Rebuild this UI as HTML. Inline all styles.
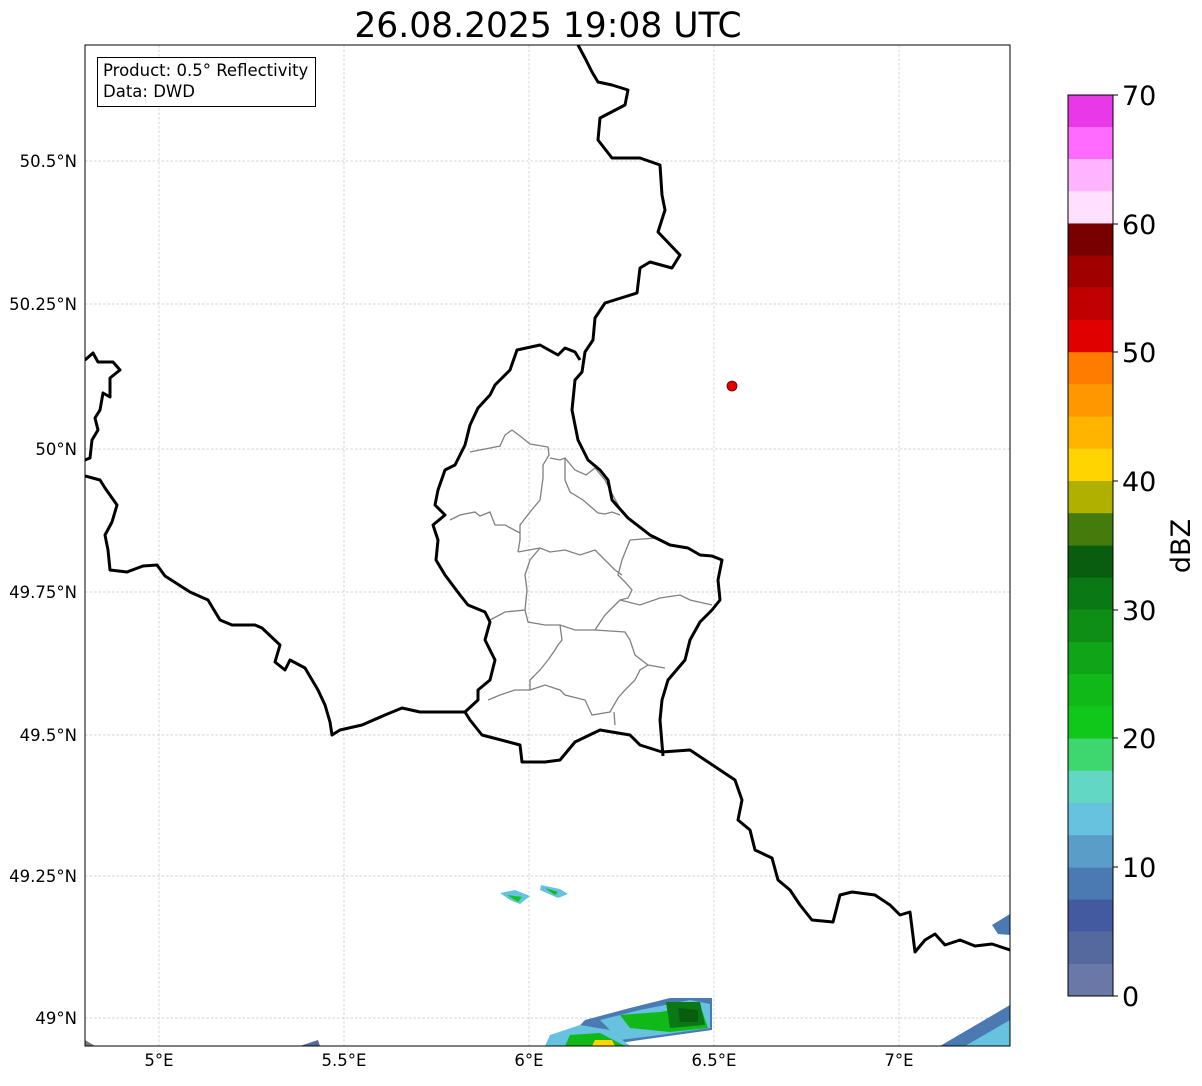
<!DOCTYPE html>
<html><head><meta charset="utf-8"><style>
body{margin:0;background:#fff;width:1202px;height:1081px;overflow:hidden;font-family:"Liberation Sans","DejaVu Sans",sans-serif}
</style></head><body>
<svg width="1202" height="1081" xmlns="http://www.w3.org/2000/svg" font-family="DejaVu Sans, Liberation Sans, sans-serif">
<text x="548" y="37" font-size="34.5" text-anchor="middle">26.08.2025 19:08 UTC</text>
<g stroke="#c4c4c4" stroke-width="0.7" stroke-dasharray="2.5,2">
<line x1="159" y1="45" x2="159" y2="1046"/><line x1="344" y1="45" x2="344" y2="1046"/><line x1="529" y1="45" x2="529" y2="1046"/><line x1="714" y1="45" x2="714" y2="1046"/><line x1="899" y1="45" x2="899" y2="1046"/>
<line x1="85" y1="161" x2="1010" y2="161"/><line x1="85" y1="304" x2="1010" y2="304"/><line x1="85" y1="449" x2="1010" y2="449"/><line x1="85" y1="592" x2="1010" y2="592"/><line x1="85" y1="735" x2="1010" y2="735"/><line x1="85" y1="876" x2="1010" y2="876"/><line x1="85" y1="1018" x2="1010" y2="1018"/>
</g>
<clipPath id="c"><rect x="85" y="45" width="925" height="1001"/></clipPath>
<g clip-path="url(#c)">
<g stroke="none">
<polygon points="500,893 515,890 530,896 520,904 510,900" fill="#66c2de"/>
<polygon points="507,895 522,897 518,902" fill="#10c81a"/>
<polygon points="541,885 560,889 568,894 558,898 540,890" fill="#66c2de"/>
<polygon points="545,888 558,892 555,895" fill="#10b818"/>
<polygon points="585,1020 630,1008 670,998 712,998 712,1030 640,1040 600,1046 560,1046" fill="#4b7ab2"/>
<polygon points="600,1020 640,1010 690,1000 710,1004 710,1028 660,1035 620,1040" fill="#66c2de"/>
<polygon points="620,1015 660,1012 700,1005 708,1028 670,1032 630,1028" fill="#10b818"/>
<polygon points="666,1002 700,1002 705,1025 670,1028" fill="#0a7814"/>
<polygon points="678,1008 698,1010 698,1022 680,1022" fill="#085e0e"/>
<polygon points="550,1035 580,1025 610,1030 630,1046 545,1046" fill="#66c2de"/>
<polygon points="570,1035 600,1033 625,1046 565,1046" fill="#10b818"/>
<polygon points="595,1040 612,1040 615,1046 592,1046" fill="#ffd400"/>
<polygon points="940,1046 1010,1005 1010,1046" fill="#4b7ab2"/>
<polygon points="965,1046 1010,1020 1010,1046" fill="#66c2de"/>
<polygon points="992,925 1010,914 1010,935 998,934" fill="#4b7ab2"/>
<polygon points="300,1046 318,1040 320,1046" fill="#55699f"/>
<polygon points="85,1040 95,1046 85,1046" fill="#777"/>
</g>
<g fill="none" stroke="#808080" stroke-width="1.3">
<path d="M470,452 L480,450 L500,446 L505,435 L512,430 L520,436 L530,444 L548,447 L549,455 L543,465 L543,478 L540,500 L530,512 L520,525 L520,540 L518,552"/>
<path d="M450,520 L460,515 L475,512 L480,516 L490,512 L495,525 L505,525 L520,533"/>
<path d="M550,458 L560,460 L565,458 L575,470 L586,475 L595,468 L605,480 L610,490 L622,512"/>
<path d="M565,458 L565,480 L570,492 L583,500 L598,513 L605,514 L612,512 L620,515"/>
<path d="M518,552 L540,548 L550,552 L565,550 L580,555 L595,550 L605,560 L615,570 L622,575"/>
<path d="M630,540 L655,538 M630,540 L622,560 L618,575 L625,582 L632,590 L628,598 L620,600"/>
<path d="M540,548 L530,560 L525,575 L527,590 L525,610 L505,612 L490,620"/>
<path d="M525,610 L528,622 L545,625 L560,625 L575,630 L595,630 L605,615 L620,600 L640,605 L660,598 L680,595 L690,600 L712,605"/>
<path d="M560,625 L562,640 L558,645 L555,650 L548,660 L540,670 L530,680 L530,690 L515,690 L500,695 L488,700"/>
<path d="M595,630 L625,632 L630,640 L635,655 L648,665 L665,668"/>
<path d="M530,690 L545,685 L560,690 L565,695 L585,700 L592,715 L610,712 L618,698 L625,690 L635,680 L640,670 L648,665"/>
<path d="M614,712 L615,725"/>
</g>
<g fill="none" stroke="#000" stroke-width="3" stroke-linejoin="round">
<path d="M578,45 L585,58 L592,72 L598,82 L612,85 L628,90 L625,105 L600,118 L598,140 L612,158 L640,158 L660,165 L662,195 L665,210 L658,232 L680,255 L672,268 L650,262 L640,268 L637,293 L605,303 L595,318 L593,340 L585,352 L582,372 L575,380 L572,410 L578,440 L588,460 L600,470 L608,480 L612,500 L628,518 L650,535 L670,545 L688,548 L700,555 L712,556 L722,560 L718,580 L720,600 L712,610 L700,622 L690,640 L685,660 L668,680 L662,700 L660,720 L663,756"/>
<path d="M580,360 L575,352 L565,348 L558,355 L540,345 L517,350 L510,370 L495,385 L490,395 L478,408 L470,425 L465,445 L455,465 L445,470 L438,490 L435,505 L445,515 L433,525 L438,540 L436,560 L445,575 L460,595 L468,605 L485,612 L490,622 L485,640 L495,660 L490,680 L478,690 L478,700 L465,712 L470,720 L482,735 L520,745 L522,762 L545,762 L560,760 L575,742 L600,730 L630,735 L640,745 L662,752 L690,750 L720,770 L735,780 L742,800 L738,820 L750,830 L755,850 L772,858 L778,880 L790,890 L800,905 L812,920 L833,922 L840,895 L852,892 L875,895 L890,905 L900,915 L910,912 L915,952 L925,940 L935,934 L945,945 L960,940 L975,946 L992,944 L1010,950"/>
<path d="M465,712 L440,712 L420,712 L402,708 L385,715 L362,725 L340,730 L332,735 L330,722 L325,705 L318,690 L305,668 L290,660 L285,670 L275,662 L280,645 L262,628 L255,625 L232,625 L220,620 L208,600 L190,592 L165,576 L157,565 L143,566 L127,572 L110,570 L108,550 L105,535 L112,522 L117,505 L105,488 L100,480 L85,476"/>
<path d="M85,360 L93,353 L98,362 L113,362 L120,370 L110,378 L110,397 L103,393 L100,410 L95,418 L98,430 L92,440 L90,458 L85,460"/>
</g>
<circle cx="732" cy="386" r="5" fill="#e00000" stroke="#600" stroke-width="0.8"/>
</g>
<rect x="85" y="45" width="925" height="1001" fill="none" stroke="#000" stroke-width="1"/>
<rect x="97.5" y="57.5" width="218" height="49" fill="#fff" stroke="#000" stroke-width="1"/>
<text x="103" y="76" font-size="16.5">Product: 0.5° Reflectivity</text>
<text x="103" y="97" font-size="16.5">Data: DWD</text>
<g font-size="16.5" text-anchor="end">
<text x="77" y="167">50.5°N</text><text x="77" y="310">50.25°N</text><text x="77" y="455">50°N</text><text x="77" y="598">49.75°N</text><text x="77" y="741">49.5°N</text><text x="77" y="882">49.25°N</text><text x="77" y="1024">49°N</text>
</g>
<g font-size="16.5" text-anchor="middle">
<text x="159" y="1066">5°E</text><text x="344" y="1066">5.5°E</text><text x="529" y="1066">6°E</text><text x="714" y="1066">6.5°E</text><text x="899" y="1066">7°E</text>
</g>
<g>
<rect x="1068" y="963.8" width="45" height="32.4" fill="#6a78a8"/>
<rect x="1068" y="931.6" width="45" height="32.4" fill="#55699f"/>
<rect x="1068" y="899.4" width="45" height="32.4" fill="#445aa0"/>
<rect x="1068" y="867.2" width="45" height="32.4" fill="#4b7ab2"/>
<rect x="1068" y="835.0" width="45" height="32.4" fill="#5a9dc8"/>
<rect x="1068" y="802.8" width="45" height="32.4" fill="#66c2de"/>
<rect x="1068" y="770.6" width="45" height="32.4" fill="#62d8c4"/>
<rect x="1068" y="738.4" width="45" height="32.4" fill="#3ed66e"/>
<rect x="1068" y="706.2" width="45" height="32.4" fill="#10c81a"/>
<rect x="1068" y="674.0" width="45" height="32.4" fill="#10b818"/>
<rect x="1068" y="641.8" width="45" height="32.4" fill="#10a418"/>
<rect x="1068" y="609.6" width="45" height="32.4" fill="#0e8e14"/>
<rect x="1068" y="577.4" width="45" height="32.4" fill="#0a7814"/>
<rect x="1068" y="545.2" width="45" height="32.4" fill="#085e0e"/>
<rect x="1068" y="513.0" width="45" height="32.4" fill="#457a0c"/>
<rect x="1068" y="480.8" width="45" height="32.4" fill="#b0b000"/>
<rect x="1068" y="448.6" width="45" height="32.4" fill="#ffd400"/>
<rect x="1068" y="416.4" width="45" height="32.4" fill="#ffb400"/>
<rect x="1068" y="384.2" width="45" height="32.4" fill="#ff9800"/>
<rect x="1068" y="352.0" width="45" height="32.4" fill="#ff7c00"/>
<rect x="1068" y="319.8" width="45" height="32.4" fill="#e00000"/>
<rect x="1068" y="287.6" width="45" height="32.4" fill="#c00000"/>
<rect x="1068" y="255.4" width="45" height="32.4" fill="#a00000"/>
<rect x="1068" y="223.2" width="45" height="32.4" fill="#780000"/>
<rect x="1068" y="191.0" width="45" height="32.4" fill="#ffe0ff"/>
<rect x="1068" y="158.8" width="45" height="32.4" fill="#ffb4ff"/>
<rect x="1068" y="126.6" width="45" height="32.4" fill="#ff6aff"/>
<rect x="1068" y="95" width="45" height="32" fill="#e838e8"/>
<rect x="1068" y="95" width="45" height="901" fill="none" stroke="#000" stroke-width="1"/>
</g>
<g stroke="#000"><line x1="1113" y1="996" x2="1118" y2="996"/><line x1="1113" y1="867" x2="1118" y2="867"/><line x1="1113" y1="738" x2="1118" y2="738"/><line x1="1113" y1="610" x2="1118" y2="610"/><line x1="1113" y1="481" x2="1118" y2="481"/><line x1="1113" y1="352" x2="1118" y2="352"/><line x1="1113" y1="224" x2="1118" y2="224"/><line x1="1113" y1="95" x2="1118" y2="95"/></g>
<g font-size="27">
<text x="1122" y="1006">0</text><text x="1122" y="877">10</text><text x="1122" y="748">20</text><text x="1122" y="620">30</text><text x="1122" y="491">40</text><text x="1122" y="362">50</text><text x="1122" y="234">60</text><text x="1122" y="105">70</text>
</g>
<text transform="translate(1190,546) rotate(-90)" font-size="27" text-anchor="middle">dBZ</text>
</svg>
</body></html>
